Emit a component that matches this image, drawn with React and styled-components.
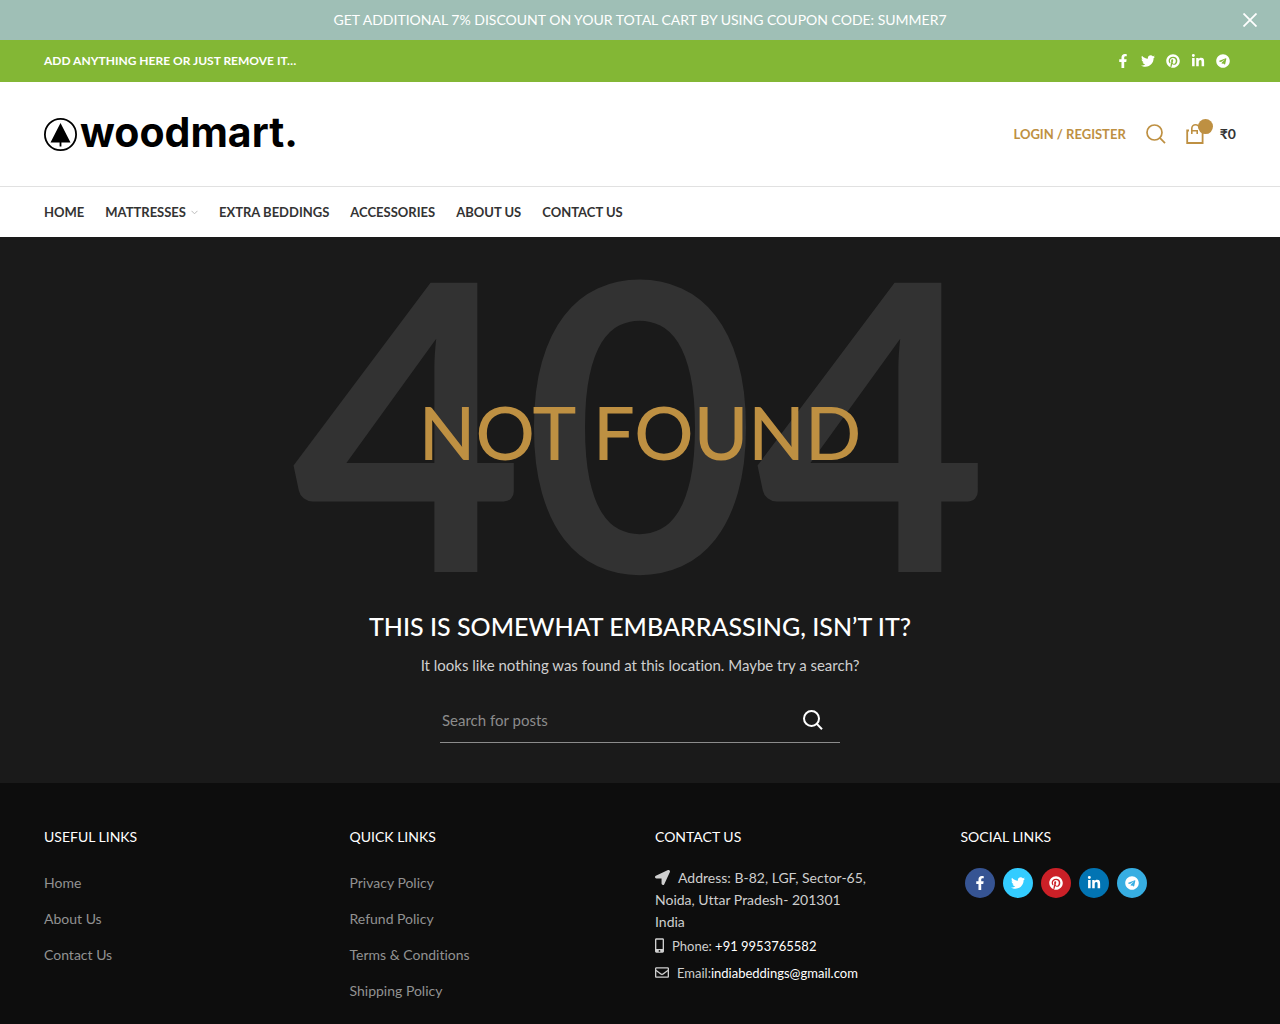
import React, { useState } from 'react';
import styled, { createGlobalStyle } from 'styled-components';
import {
	FaFacebookF,
	FaTwitter,
	FaPinterest,
	FaLinkedinIn,
	FaTelegram,
	FaLocationArrow,
	FaMobileAlt,
	FaRegEnvelope,
} from 'react-icons/fa';

const GlobalStyle = createGlobalStyle`
	* {
		box-sizing: border-box;
	}
	body {
		margin: 0;
		background: #0d0d0d;
		font-family: Lato, sans-serif;
		font-size: 14px;
		font-variant-ligatures: none;
		line-height: 22px;
	}
	a {
		color: inherit;
		text-decoration: none;
	}
	ul {
		list-style: none;
		margin: 0;
		padding: 0;
	}
`;

const Page = styled.div`
	display: flex;
	flex-direction: column;
	min-height: 100vh;
`;

const Container = styled.div`
	width: 100%;
	max-width: 1222px;
	margin: 0 auto;
	padding: 0 15px;
`;

const Banner = styled.div`
	display: grid;
	grid-template-columns: 60px 1fr 60px;
	align-items: center;
	height: 40px;
	background: #9fbfb6;
	color: #fff;
`;

const BannerText = styled.a`
	grid-column: 2;
	text-align: center;
`;

const IconButton = styled.button`
	display: flex;
	align-items: center;
	justify-content: center;
	width: ${({ $size }) => $size}px;
	height: 40px;
	padding: 0;
	border: 0;
	background: none;
	color: inherit;
	cursor: pointer;
`;

const TopBar = styled.div`
	background: #83b735;
	color: #fff;
	font-size: 12px;
	font-weight: 700;
`;

const Row = styled(Container)`
	display: flex;
	align-items: center;
	justify-content: space-between;
	height: ${({ $height }) => $height}px;
`;

const TopSocial = styled.ul`
	display: flex;
	align-items: center;
	gap: 11px;
	padding-right: 6px;
	font-size: 14px;

	a,
	svg {
		display: block;
	}
`;

const Header = styled.header`
	background: #fff;
	color: #333;
	border-bottom: 1px solid #e1e1e1;
`;

const Logo = styled.a`
	display: flex;
	align-items: center;
	gap: 2px;
	color: #000;
	font-family: Inter, sans-serif;
	font-size: 41px;
	font-weight: 700;
	line-height: 48px;

	span {
		padding-bottom: 5px;
	}
`;

const Tools = styled.div`
	display: flex;
	align-items: center;
	gap: 20px;
	color: #be9042;
	font-size: 13px;
	font-weight: 700;
`;

const ToolLink = styled.a`
	display: flex;
	align-items: center;
	gap: 6px;
`;

const Price = styled.span`
	color: #333;
	font-size: 14px;
`;

const Nav = styled.nav`
	background: #fff;
	color: #333;
	font-size: 13px;
	font-weight: 700;
	text-transform: uppercase;
`;

const Menu = styled.ul`
	display: flex;
	gap: 21px;

	a {
		display: flex;
		align-items: center;
		gap: 5px;
	}
`;

const Hero = styled.main`
	display: flex;
	flex-direction: column;
	align-items: center;
	padding: 40px 15px;
	background: #1a1a1a;
	text-align: center;
`;

const ErrorTitle = styled.div`
	display: grid;
	place-items: center;

	> * {
		grid-area: 1 / 1;
		margin: 0;
	}
`;

const Code = styled.span`
	color: #323232;
	font-size: 400px;
	font-weight: 700;
	line-height: 280px;
`;

const NotFound = styled.h1`
	padding-top: 30px;
	color: #be9042;
	font-size: 74px;
	font-weight: 500;
	line-height: 80px;
`;

const Lead = styled.h2`
	margin: 52px 0 10px;
	color: #fff;
	font-size: 25px;
	font-weight: 500;
	line-height: 34px;
`;

const Hint = styled.p`
	margin: 0;
	color: #cfcfcf;
	font-size: 15px;
	line-height: 24px;
`;

const SearchForm = styled.form`
	display: flex;
	align-items: center;
	width: 100%;
	max-width: 400px;
	height: 46px;
	margin-top: 20px;
	border-bottom: 1px solid #8c8c8c;
	color: #fff;
`;

const SearchInput = styled.input`
	flex: 1;
	min-width: 0;
	padding: 0 2px;
	border: 0;
	outline: 0;
	background: transparent;
	color: #ccc;
	font: 15px/24px Lato, sans-serif;

	&::placeholder {
		color: #8c8c8c;
		opacity: 1;
	}
`;

const Footer = styled.footer`
	flex: 1;
	padding-top: 42px;
	background: #0d0d0d;
	color: #cfcfcf;
`;

const FooterGrid = styled(Container)`
	display: grid;
	grid-template-columns: repeat(4, 1fr);
	gap: 30px;
`;

const WidgetTitle = styled.h3`
	margin: 0 0 18px;
	color: #fff;
	font-size: 14px;
	font-weight: 400;
	line-height: 24px;
	text-transform: uppercase;
`;

const Links = styled.ul`
	color: #929292;

	li {
		height: 36px;
		padding-top: 5px;
	}
`;

const Address = styled.address`
	font-style: normal;
`;

const ContactLine = styled.div`
	padding-top: ${({ $top }) => $top || 0}px;
	font-size: ${({ $small }) => ($small ? 13 : 14)}px;

	svg {
		width: ${({ $icon }) => $icon}px;
		height: 15px;
		margin-right: 8px;
		vertical-align: -2px;
	}
	a {
		color: #fff;
	}
`;

const Social = styled.ul`
	display: flex;
	gap: 8px;
	padding: 1px 4px;
`;

const Round = styled.a`
	display: flex;
	align-items: center;
	justify-content: center;
	width: 30px;
	height: 30px;
	border-radius: 50%;
	background: ${({ $color }) => $color};
	color: #fff;
	font-size: 14px;
`;

const networks = [
	{ name: 'Facebook', Icon: FaFacebookF, color: '#365493' },
	{ name: 'Twitter', Icon: FaTwitter, color: '#33ccff' },
	{ name: 'Pinterest', Icon: FaPinterest, color: '#cb2027' },
	{ name: 'LinkedIn', Icon: FaLinkedinIn, color: '#0274b3' },
	{ name: 'Telegram', Icon: FaTelegram, color: '#37aee2' },
];

const menu = ['Home', 'Mattresses', 'Extra Beddings', 'Accessories', 'About Us', 'Contact Us'];

const columns = [
	{ title: 'Useful Links', links: ['Home', 'About Us', 'Contact Us'] },
	{
		title: 'Quick Links',
		links: ['Privacy Policy', 'Refund Policy', 'Terms & Conditions', 'Shipping Policy'],
	},
];

const SearchIcon = ({ width = 2 }) => (
	<svg width="20" height="20" viewBox="0 0 20 20" fill="none" stroke="currentColor" strokeWidth={width}>
		<circle cx="8.5" cy="8.5" r="7.5" />
		<path d="M13.6 13.6l5.4 5.6" />
	</svg>
);

const BagIcon = () => (
	<svg width="28" height="30" viewBox="0 0 28 30" fill="none" stroke="currentColor">
		<path d="M3 11.5H1.2V24h15.4V13" strokeWidth="1.8" />
		<path d="M5.8 15V9.5a3.7 3.7 0 0 1 7.4 0M5.8 11.8h6M11.2 11v4" strokeWidth="1.6" />
		<circle cx="19.5" cy="7.6" r="7.5" fill="currentColor" stroke="none" />
	</svg>
);

const TreeIcon = () => (
	<svg width="34" height="34" viewBox="0 0 34 34">
		<circle cx="16.5" cy="17.5" r="15.6" fill="none" stroke="#000" strokeWidth="1.8" />
		<path d="M16.5 6L26.5 25.5H17.4v4h-1.8v-4H6.5z" />
	</svg>
);

const App = () => {
	const [banner, setBanner] = useState(true);

	return (
		<Page>
			<GlobalStyle />
			{banner && (
				<Banner>
					<BannerText href="#">
						GET ADDITIONAL 7% DISCOUNT ON YOUR TOTAL CART BY USING COUPON CODE: SUMMER7
					</BannerText>
					<IconButton $size={60} aria-label="Close" onClick={() => setBanner(false)}>
						<svg width="14" height="14" viewBox="0 0 14 14" stroke="currentColor" strokeWidth="1.8">
							<path d="M0.5 0.5l13 13M13.5 0.5l-13 13" />
						</svg>
					</IconButton>
				</Banner>
			)}
			<TopBar>
				<Row $height={42}>
					<span>ADD ANYTHING HERE OR JUST REMOVE IT…</span>
					<TopSocial>
						{networks.map(({ name, Icon }) => (
							<li key={name}>
								<a href="#" aria-label={name}>
									<Icon />
								</a>
							</li>
						))}
					</TopSocial>
				</Row>
			</TopBar>
			<Header>
				<Row $height={104}>
					<Logo href="#">
						<TreeIcon />
						<span>woodmart.</span>
					</Logo>
					<Tools>
						<a href="#">LOGIN / REGISTER</a>
						<ToolLink href="#" aria-label="Search">
							<SearchIcon width={1.7} />
						</ToolLink>
						<ToolLink href="#">
							<BagIcon />
							<Price>₹0</Price>
						</ToolLink>
					</Tools>
				</Row>
			</Header>
			<Nav>
				<Row $height={50}>
					<Menu>
						{menu.map((item) => (
							<li key={item}>
								<a href="#">
									{item}
									{item === 'Mattresses' && (
										<svg width="7" height="5" viewBox="0 0 7 5" fill="none" stroke="#bbb">
											<path d="M0.5 0.8l3 3 3-3" />
										</svg>
									)}
								</a>
							</li>
						))}
					</Menu>
				</Row>
			</Nav>
			<Hero>
				<ErrorTitle>
					<Code aria-hidden="true">404</Code>
					<NotFound>NOT FOUND</NotFound>
				</ErrorTitle>
				<Lead>THIS IS SOMEWHAT EMBARRASSING, ISN’T IT?</Lead>
				<Hint>It looks like nothing was found at this location. Maybe try a search?</Hint>
				<SearchForm onSubmit={(e) => e.preventDefault()}>
					<SearchInput type="text" placeholder="Search for posts" aria-label="Search for posts" />
					<IconButton $size={54} type="submit" aria-label="Search">
						<SearchIcon />
					</IconButton>
				</SearchForm>
			</Hero>
			<Footer>
				<FooterGrid>
					{columns.map(({ title, links }) => (
						<div key={title}>
							<WidgetTitle>{title}</WidgetTitle>
							<Links>
								{links.map((link) => (
									<li key={link}>
										<a href="#">{link}</a>
									</li>
								))}
							</Links>
						</div>
					))}
					<div>
						<WidgetTitle>Contact Us</WidgetTitle>
						<Address>
							<ContactLine $icon={15}>
								<FaLocationArrow />
								Address: B-82, LGF, Sector-65,
								<br />
								Noida, Uttar Pradesh- 201301
								<br />
								India
							</ContactLine>
							<ContactLine $icon={9} $top={2} $small>
								<FaMobileAlt />
								Phone: <a href="tel:+919953765582">+91 9953765582</a>
							</ContactLine>
							<ContactLine $icon={14} $top={5} $small>
								<FaRegEnvelope />
								Email:<a href="mailto:indiabeddings@gmail.com">indiabeddings@gmail.com</a>
							</ContactLine>
						</Address>
					</div>
					<div>
						<WidgetTitle>Social Links</WidgetTitle>
						<Social>
							{networks.map(({ name, Icon, color }) => (
								<li key={name}>
									<Round href="#" $color={color} aria-label={name}>
										<Icon />
									</Round>
								</li>
							))}
						</Social>
					</div>
				</FooterGrid>
			</Footer>
		</Page>
	);
};

export default App;
